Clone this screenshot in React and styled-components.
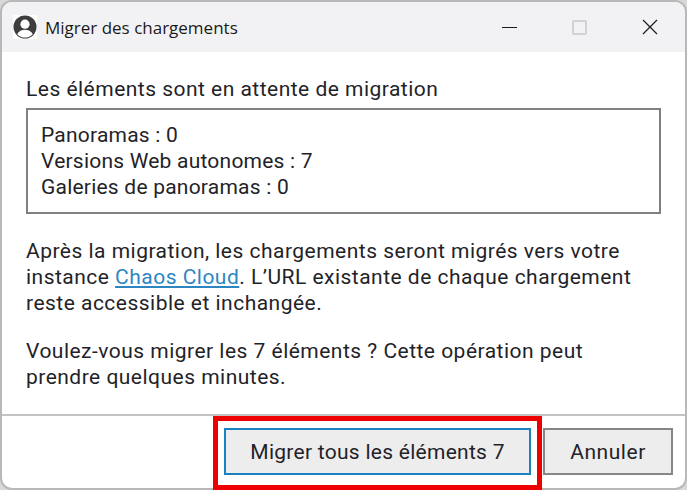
import React from 'react'
import styled, { createGlobalStyle } from 'styled-components'

const App = () => (
  <>
    <GlobalStyle />
    <Window>
      <TitleBar>
        <AppIcon viewBox="0 0 24 24">
          <rect width="24" height="24" fill="#fff" />
          <circle cx="12" cy="12" r="11.5" fill="#3d3d3d" />
          <circle cx="12" cy="9.2" r="4.6" fill="#fff" />
          <path d="M4.2 19.2c1.6-3 4.6-4.4 7.8-4.4s6.2 1.4 7.8 4.4A11 11 0 0 1 12 22.6a11 11 0 0 1-7.8-3.4z" fill="#fff" />
        </AppIcon>
        <Title>Migrer des chargements</Title>
        <Controls>
          <Minimize />
          <Maximize />
          <CloseIcon viewBox="0 0 16 16">
            <path d="M1 1l14 14M15 1L1 15" stroke="#1a1a1a" strokeWidth="1.2" fill="none" />
          </CloseIcon>
        </Controls>
      </TitleBar>
      <Body>
        <Text>Les éléments sont en attente de migration</Text>
        <CountBox>
          <div>Panoramas : 0</div>
          <div>Versions Web autonomes : 7</div>
          <div>Galeries de panoramas : 0</div>
        </CountBox>
        <Paragraph>
          Après la migration, les chargements seront migrés vers votre
          <br />
          instance <CloudLink href="#">Chaos Cloud</CloudLink>. L’URL existante de chaque chargement
          <br />
          reste accessible et inchangée.
        </Paragraph>
        <Paragraph>
          Voulez-vous migrer les 7 éléments ? Cette opération peut
          <br />
          prendre quelques minutes.
        </Paragraph>
      </Body>
      <Footer>
        <Highlight>
          <Button primary>Migrer tous les éléments 7</Button>
        </Highlight>
        <Button>Annuler</Button>
      </Footer>
    </Window>
  </>
)

export default App

// Style
const GlobalStyle = createGlobalStyle`
  html, body {
    margin: 0;
    height: 100%;
    background: #d8d8d8;
  }
  body {
    font-family: Roboto, 'Liberation Sans', sans-serif;
    color: #1f2328;
    overflow: hidden;
  }
`
const Window = styled.div`
  box-sizing: border-box;
  width: 687px;
  height: 490px;
  display: flex;
  flex-direction: column;
  background: #fff;
  border: 2px solid #b8b8b8;
  border-radius: 12px;
`
const TitleBar = styled.div`
  height: 50px;
  flex-shrink: 0;
  display: flex;
  align-items: center;
  padding-left: 11px;
  background: #f2f2f4;
  border-radius: 10px 10px 0 0;
`
const AppIcon = styled.svg`
  width: 24px;
  height: 24px;
`
const Title = styled.span`
  margin-left: 8px;
  font-family: 'Open Sans', sans-serif;
  font-size: 17px;
  color: #1a1a1a;
`
const Controls = styled.div`
  margin-left: auto;
  display: flex;
  align-items: center;
  padding-right: 27px;
`
const Minimize = styled.span`
  width: 15px;
  height: 1px;
  background: #1a1a1a;
`
const Maximize = styled.span`
  box-sizing: border-box;
  width: 15px;
  height: 15px;
  margin-left: 55px;
  border: 2px solid #d2d2d2;
  border-radius: 2px;
`
const CloseIcon = styled.svg`
  width: 16px;
  height: 16px;
  margin-left: 55px;
`
const Body = styled.div`
  flex: 1;
  padding: 24px 24px 0;
  font-size: 21px;
  letter-spacing: 0.48px;
  line-height: 26px;
`
const Text = styled.div`
  margin-bottom: 6px;
`
const CountBox = styled.div`
  box-sizing: border-box;
  height: 106px;
  padding: 12px 13px;
  border: 2px solid #808080;
  margin-bottom: 24px;
  letter-spacing: 0.22px;
`
const Paragraph = styled.p`
  margin: 0 0 22px;
`
const CloudLink = styled.a`
  color: #2d86c2;
`
const Footer = styled.div`
  height: 74px;
  flex-shrink: 0;
  box-sizing: border-box;
  display: flex;
  align-items: flex-start;
  justify-content: flex-end;
  gap: 1px;
  padding-right: 12px;
  border-top: 2px solid #c4c4c4;
`
const Highlight = styled.div`
  box-sizing: border-box;
  width: 329px;
  height: 74px;
  padding: 7px 6px 0;
  border: 5px solid #ee0000;
`
const Button = styled.button`
  box-sizing: border-box;
  width: ${p => (p.primary ? '307px' : '130px')};
  height: 47px;
  margin-top: ${p => (p.primary ? '0' : '12px')};
  padding: 0;
  font: inherit;
  font-size: 21px;
  letter-spacing: ${p => (p.primary ? '0.27px' : '0.55px')};
  color: inherit;
  background: #ededed;
  border: 2px solid ${p => (p.primary ? '#1a82c0' : '#868686')};
`
